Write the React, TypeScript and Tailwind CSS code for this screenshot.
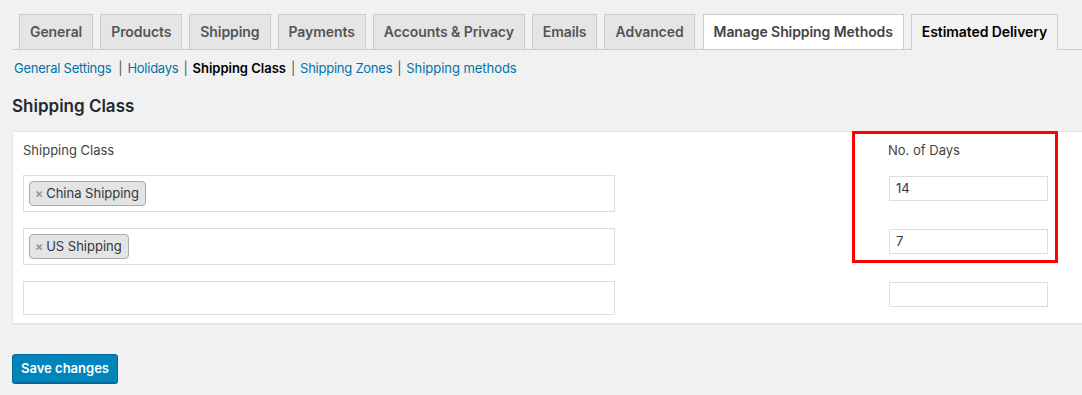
import React from "react";

const font = { fontFamily: 'Inter, "Noto Sans", "Liberation Sans", sans-serif' };

const tabs = [
  "General",
  "Products",
  "Shipping",
  "Payments",
  "Accounts & Privacy",
  "Emails",
  "Advanced",
];

function Chip({ label }: { label: string }) {
  return (
    <span className="inline-flex h-[25px] items-center rounded-[4px] border border-[#aaaaaa] bg-[#e4e4e4] pl-[5px] pr-[6px] text-[13px] text-[#32373c]">
      <span className="mr-[3px] text-[12px] font-bold leading-none text-[#999]">×</span>
      {label}
    </span>
  );
}

function Sep() {
  return <span className="mx-[5px] text-[#555]">|</span>;
}

const rows = [
  { chip: "China Shipping", days: "14", h: "h-[37px]" },
  { chip: "US Shipping", days: "7", h: "h-[37px]" },
  { chip: "", days: "", h: "h-[34px]" },
];

export default function App() {
  return (
    <div className="min-h-[395px] w-full overflow-hidden bg-[#f1f1f1] pt-[14px] pl-[12px]" style={font}>
      {/* Tabs */}
      <div className="flex items-end border-b border-[#cccccc]">
        {tabs.map((t) => (
          <div
            key={t}
            className="ml-[7px] h-[35px] border border-b-0 border-[#cccccc] bg-[#e5e5e5] px-[10px] text-[14px] font-semibold leading-[33px] tracking-[-0.08px] text-[#555555]"
          >
            {t}
          </div>
        ))}
        <div className="ml-[8px] h-[35px] border border-b-0 border-[#cccccc] bg-white px-[10px] text-[14px] font-semibold leading-[33px] tracking-[-0.08px] text-[#444444]">
          Manage Shipping Methods
        </div>
        <div className="relative -mb-px ml-[7px] h-[36px] border border-b-0 border-[#cccccc] bg-[#f1f1f1] px-[10px] text-[14px] font-semibold leading-[33px] tracking-[-0.08px] text-black">
          Estimated Delivery
        </div>
      </div>

      {/* Sub navigation */}
      <div className="mt-[9px] flex items-center pl-[2px] text-[13px] leading-[18px] tracking-[-0.25px] text-[#555]">
        <span className="mr-[2px] text-[#0073aa]">General Settings</span>
        <Sep />
        <span className="text-[#0073aa]">Holidays</span>
        <Sep />
        <span className="font-semibold tracking-[0px] text-black">Shipping Class</span>
        <Sep />
        <span className="text-[#0073aa]">Shipping Zones</span>
        <Sep />
        <span className="tracking-[-0.05px] text-[#0073aa]">Shipping methods</span>
      </div>

      <h2 className="mt-[17px] text-[17px] font-semibold leading-[24px] text-[#23282d]">Shipping Class</h2>

      {/* Panel */}
      <div className="relative mt-[13px] w-[1100px] border border-[#e5e5e5] bg-white pt-[8px] pb-[8px] pl-[10px] shadow-[0_1px_1px_rgba(0,0,0,0.04)]">
        <div className="flex text-[13px] leading-[20px] text-[#444]">
          <div className="w-[592px]">Shipping Class</div>
          <div className="ml-[273px]">No. of Days</div>
        </div>
        <div className="mt-[15px] flex flex-col gap-[16px]">
          {rows.map((r, i) => (
            <div key={i} className="flex items-start">
              <div className={`flex ${r.h} w-[592px] items-center border border-[#dddddd] bg-white pl-[5px]`}>
                {r.chip && <Chip label={r.chip} />}
              </div>
              <div className="ml-[274px] mt-[1px] flex h-[25px] w-[159px] items-center border border-[#dddddd] bg-white pl-[6px] text-[13px] text-[#32373c]">
                {r.days}
              </div>
            </div>
          ))}
        </div>
        {/* Annotation */}
        <div className="pointer-events-none absolute left-[839px] top-[-1px] h-[132px] w-[206px] border-[3px] border-[#ff0000]" />
      </div>

      <button className="mt-[30px] h-[29px] w-[106px] rounded-[3px] border border-[#006799] bg-[#0085ba] text-[13px] font-semibold text-white shadow-[0_1px_0_#006799]">
        Save changes
      </button>
    </div>
  );
}
